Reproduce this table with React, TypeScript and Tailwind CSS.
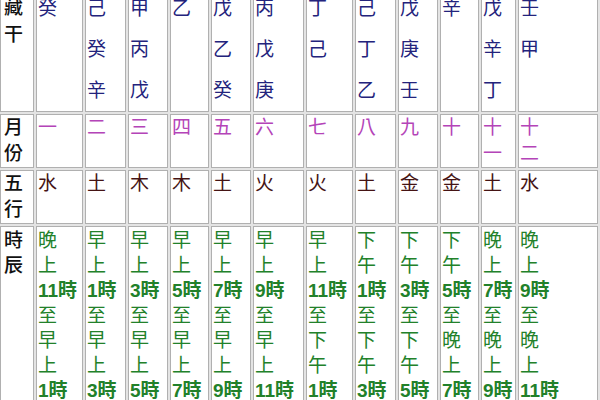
import React from "react";

type Column = {
  stems: string[];
  month: string[];
  element: string;
  hours: string[];
};

const split = (from: string, to: string) => {
  // "晚上11時" -> ["晚", "上", "11時"]
  const parts = (s: string) => [s[0], s[1], s.slice(2)];
  return [...parts(from), "至", ...parts(to)];
};

const columns: Column[] = [
  { stems: ["癸"], month: ["一"], element: "水", hours: split("晚上11時", "早上1時") },
  { stems: ["己", "癸", "辛"], month: ["二"], element: "土", hours: split("早上1時", "早上3時") },
  { stems: ["甲", "丙", "戊"], month: ["三"], element: "木", hours: split("早上3時", "早上5時") },
  { stems: ["乙"], month: ["四"], element: "木", hours: split("早上5時", "早上7時") },
  { stems: ["戊", "乙", "癸"], month: ["五"], element: "土", hours: split("早上7時", "早上9時") },
  { stems: ["丙", "戊", "庚"], month: ["六"], element: "火", hours: split("早上9時", "早上11時") },
  { stems: ["丁", "己"], month: ["七"], element: "火", hours: split("早上11時", "下午1時") },
  { stems: ["己", "丁", "乙"], month: ["八"], element: "土", hours: split("下午1時", "下午3時") },
  { stems: ["戊", "庚", "壬"], month: ["九"], element: "金", hours: split("下午3時", "下午5時") },
  { stems: ["辛"], month: ["十"], element: "金", hours: split("下午5時", "晚上7時") },
  { stems: ["戊", "辛", "丁"], month: ["十", "一"], element: "土", hours: split("晚上7時", "晚上9時") },
  { stems: ["壬", "甲"], month: ["十", "二"], element: "水", hours: split("晚上9時", "晚上11時") },
];

// cell widths in px, border included
const widths = [34, 47, 41, 40, 39, 40, 51, 47, 41, 40, 39, 35, 80];

const cell = "border border-[#b0b0b0] bg-white align-top px-[1px] p-0";
const head = "border border-[#b0b0b0] bg-white align-top pl-[3px] font-medium text-[#111]";

const Lines: React.FC<{ items: string[] }> = ({ items }) => (
  <>
    {items.map((t, i) => (
      <div key={i}>{t}</div>
    ))}
  </>
);

const App: React.FC = () => {
  return (
    <div
      className="w-[600px] h-[400px] overflow-hidden bg-white text-[19px]"
      style={{ fontFamily: '"Liberation Sans", "Noto Sans CJK TC", sans-serif' }}
    >
      <table className="table-fixed border-separate border-spacing-[2px] bg-[#e4e4e4] w-[602px] -mt-[16px] -ml-[2px]">
        <colgroup>
          {widths.map((w, i) => (
            <col key={i} style={{ width: w }} />
          ))}
        </colgroup>
        <tbody>
          {/* 藏干 */}
          <tr>
            <td className={`${head} pt-[7px] leading-[27px]`}>
              <Lines items={["藏", "干"]} />
            </td>
            {columns.map((c, i) => (
              <td key={i} className={`${cell} pt-[1px] leading-[41px] text-[#23237c]`}>
                <Lines items={c.stems} />
              </td>
            ))}
          </tr>

          {/* 月份 */}
          <tr>
            <td className={`${head} leading-[26px]`}>
              <Lines items={["月", "份"]} />
            </td>
            {columns.map((c, i) => (
              <td key={i} className={`${cell} leading-[26px] text-[#b444b8]`}>
                <Lines items={c.month} />
              </td>
            ))}
          </tr>

          {/* 五行 */}
          <tr>
            <td className={`${head} leading-[26px]`}>
              <Lines items={["五", "行"]} />
            </td>
            {columns.map((c, i) => (
              <td key={i} className={`${cell} leading-[26px] text-[#451414]`}>
                {c.element}
              </td>
            ))}
          </tr>

          {/* 時辰 */}
          <tr>
            <td className={`${head} pt-[1px] leading-[25px]`}>
              <Lines items={["時", "辰"]} />
            </td>
            {columns.map((c, i) => (
              <td key={i} className={`${cell} pt-[1px] leading-[25px] text-[#22812a]`}>
                {c.hours.map((h, j) => (
                  <div key={j} className={/\d/.test(h) ? "font-bold whitespace-nowrap" : ""}>
                    {h}
                  </div>
                ))}
              </td>
            ))}
          </tr>
        </tbody>
      </table>
    </div>
  );
};

export default App;
